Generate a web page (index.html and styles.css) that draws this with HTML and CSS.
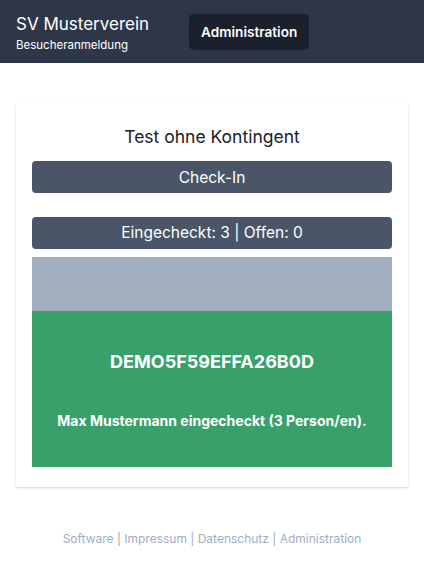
FILE: index.html
```html
<!DOCTYPE html>
<html lang="de">
<head>
<meta charset="utf-8">
<link rel="stylesheet" href="styles.css">
</head>
<body>
<header class="topbar">
  <div class="brand">
    <div class="brand-title">SV Musterverein</div>
    <div class="brand-sub">Besucheranmeldung</div>
  </div>
  <a class="admin-btn">Administration</a>
</header>
<main class="main">
  <section class="card">
    <h1 class="card-title">Test ohne Kontingent</h1>
    <button class="btn">Check-In</button>
    <div class="stats">Eingecheckt: 3 | Offen: 0</div>
    <div class="scan-area"></div>
    <div class="result">
      <div class="result-code">DEMO5F59EFFA26B0D</div>
      <div class="result-msg">Max Mustermann eingecheckt (3 Person/en).</div>
    </div>
  </section>
</main>
<footer class="footer">Software | Impressum | Datenschutz | Administration</footer>
</body>
</html>
```
FILE: styles.css
```css
* { box-sizing: border-box; }
html, body { margin: 0; padding: 0; }
body {
  font-family: Inter, "Liberation Sans", sans-serif;
  background: #fff;
  color: #1a202c;
}
.topbar {
  height: 63px;
  background: #2d3748;
  display: flex;
  align-items: center;
  padding: 0 16px;
  gap: 40px;
}
.brand { padding-top: 2px; }
.brand-title {
  color: #fff;
  font-size: 17px;
  line-height: 22px;
}
.brand-sub {
  color: #fff;
  font-size: 11.5px;
  line-height: 16px;
  margin-top: 2px;
}
.admin-btn {
  background: #1a202c;
  color: #fff;
  font-size: 13.6px;
  font-weight: 600;
  padding: 0 12px;
  height: 36px;
  line-height: 36px;
  border-radius: 5px;
  margin-top: 1px;
}
.main { padding: 40px 16px 0; }
.card {
  background: #fff;
  box-shadow: 0 1px 3px rgba(0,0,0,0.12), 0 1px 2px rgba(0,0,0,0.06);
  border-radius: 3px;
  padding: 20px 16px 20px;
  display: flex;
  flex-direction: column;
}
.card-title {
  margin: 0;
  text-align: center;
  font-size: 17.5px;
  font-weight: 400;
  line-height: 28px;
  color: #1a202c;
}
.btn {
  margin-top: 10px;
  height: 32px;
  border: 0;
  border-radius: 4px;
  background: #4a5568;
  color: #fff;
  font-family: inherit;
  font-size: 15.5px;
  padding: 0;
}
.stats {
  margin-top: 24px;
  height: 32px;
  line-height: 32px;
  border-radius: 4px;
  background: #4a5568;
  color: #fff;
  font-size: 15.5px;
  text-align: center;
}
.scan-area {
  margin-top: 8px;
  height: 54px;
  background: #a0aec0;
}
.result {
  background: #38a169;
  height: 156px;
  color: #fff;
  font-weight: 700;
  text-align: center;
  display: flex;
  flex-direction: column;
  align-items: center;
  padding-top: 38px;
}
.result-code {
  font-size: 18px;
  line-height: 26px;
}
.result-msg {
  margin-top: 36px;
  font-size: 14px;
  line-height: 20px;
}
.footer {
  text-align: center;
  color: #a0aec0;
  font-size: 12px;
  margin-top: 44px;
}
```
